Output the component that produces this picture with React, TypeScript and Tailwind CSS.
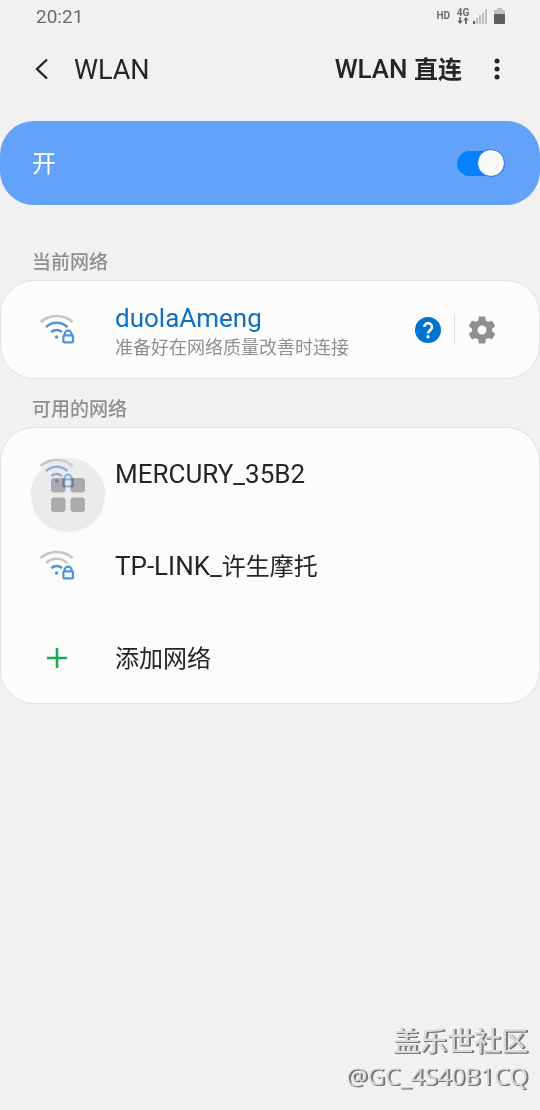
import { useState } from "react";

const OFF = "#c6c6c6";
const ON = "#4f95dc";

function WifiLock({ level }: { level: 1 | 2 }) {
  return (
    <svg viewBox="0 1 36 34" className="h-[34px] w-9" fill="none" strokeWidth="2.6" aria-hidden="true">
      <path d="M1.7 10A24 24 0 0 1 33.6 10" stroke={OFF} />
      <path d="M7 15.2A15 15 0 0 1 28.4 15.2" stroke={level > 1 ? ON : OFF} />
      <path d="M12.3 20A8.4 8.4 0 0 1 23 20" stroke={ON} />
      <circle cx="17.6" cy="25" r="1.8" fill={ON} />
      <path d="M25.6 23V22.2a3.5 3.5 0 0 1 7 0V23" stroke={ON} strokeWidth="2.3" />
      <rect x="24.4" y="23.4" width="9.6" height="7" rx="1" stroke={ON} strokeWidth="2.3" />
    </svg>
  );
}

function StatusBar() {
  return (
    <div className="flex h-8 items-center justify-between pr-[35px] pl-9 text-[#6b6b6b]">
      <time className="pt-px text-[19px] leading-8">20:21</time>
      <div className="flex h-4 items-center">
        <span className="text-[10px] leading-4 font-bold">HD</span>
        <div className="ml-[7px] flex h-4 w-3 flex-col items-center">
          <span className="text-[10px] leading-[9px] font-bold">4G</span>
          <svg viewBox="0 0 12 7" className="h-[7px] w-3" fill="#5e5e5e" aria-hidden="true">
            <path d="M2.3 0h1.6v3.8h1.9L3.1 7 .4 3.8h1.9zM8.1 7h1.6V3.2h1.9L8.9 0 6.2 3.2h1.9z" />
          </svg>
        </div>
        <svg viewBox="0 0 15 15" className="ml-1 h-[15px] w-[15px]" fill="#c0c0c0" aria-hidden="true">
          <rect x="0" y="12" width="2" height="3" fill="#5e5e5e" />
          <rect x="3" y="9" width="2" height="6" />
          <rect x="6" y="6" width="2" height="9" />
          <rect x="9" y="4" width="2" height="11" />
          <rect x="12" y="0" width="2" height="15" />
        </svg>
        <svg viewBox="0 0 11 16" className="ml-[6px] h-4 w-[11px]" aria-hidden="true">
          <path d="M3 0h5v2h2a1 1 0 0 1 1 1v4H0V3a1 1 0 0 1 1-1h2z" fill="#c0c0c0" />
          <path d="M0 6h11v9a1 1 0 0 1-1 1H1a1 1 0 0 1-1-1z" fill="#5e5e5e" />
        </svg>
      </div>
    </div>
  );
}

function Header() {
  return (
    <header className="flex h-[73px] items-center px-7 text-[#252525]">
      <button aria-label="返回" className="flex h-10 w-7 items-center justify-center">
        <svg viewBox="0 0 14 22" className="h-[22px] w-[14px]" fill="none" stroke="currentColor" strokeWidth="2.4" aria-hidden="true">
          <path d="M12 1.5L2 11l10 9.5" />
        </svg>
      </button>
      <h1 className="ml-[18px] flex-1 pt-0.5 text-[27px] leading-10">WLAN</h1>
      <button className="pt-0.5 text-[26px] leading-10 font-medium">
        WLAN <span className="text-2xl leading-10 font-bold">直连</span>
      </button>
      <button aria-label="更多选项" className="ml-6 flex h-10 w-[26px] items-center justify-start pl-2">
        <svg viewBox="0 0 6 22" className="h-[22px] w-[6px]" fill="currentColor" aria-hidden="true">
          <circle cx="3" cy="3" r="2.5" />
          <circle cx="3" cy="11" r="2.5" />
          <circle cx="3" cy="19" r="2.5" />
        </svg>
      </button>
    </header>
  );
}

function MasterSwitch() {
  const [on, setOn] = useState(true);
  return (
    <label className="mt-4 flex h-[84px] items-center justify-between rounded-[34px] bg-[#62a2fb] pr-[35px] pl-8 text-2xl text-white">
      <span className="pt-0.5">{on ? "开" : "关"}</span>
      <span className="flex h-7 w-12 items-center">
        <input
          type="checkbox"
          role="switch"
          checked={on}
          onChange={(e) => setOn(e.target.checked)}
          className="flex h-[25px] w-12 appearance-none items-center rounded-full bg-[#8a8a8a] before:size-7 before:shrink-0 before:rounded-full before:border before:border-[#1f7be0] before:bg-[#fafafa] checked:justify-end checked:bg-[#0381fe]"
        />
      </span>
    </label>
  );
}

function NetworkRow({ latin, local, icon }: { latin?: string; local?: string; icon: React.ReactNode }) {
  return (
    <li>
      <button className="flex h-[92px] w-full items-center pl-[38px] text-left">
        <span className="flex w-9 justify-center">{icon}</span>
        <span className="ml-10 text-[26px] leading-8 text-[#252525]">
          {latin}
          <span className="text-2xl leading-8">{local}</span>
        </span>
      </button>
    </li>
  );
}

function AssistButton() {
  return (
    <button
      aria-label="辅助菜单"
      className="absolute top-[30px] left-[30px] flex size-[74px] items-center justify-center rounded-full bg-[#d8d8d8]/45 shadow-[0_0_3px_rgba(0,0,0,0.06)]"
    >
      <svg viewBox="0 0 34 34" className="size-[34px] mix-blend-multiply" fill="#bababa" aria-hidden="true">
        <rect x="0" y="0" width="14.5" height="14.5" rx="3" />
        <rect x="19.5" y="0" width="14.5" height="14.5" rx="3" />
        <rect x="0" y="19.5" width="14.5" height="14.5" rx="3" />
        <rect x="19.5" y="19.5" width="14.5" height="14.5" rx="3" />
      </svg>
    </button>
  );
}

export default function App() {
  return (
    <div className="flex min-h-screen flex-col bg-[#f1f1f1] font-['Roboto','Noto_Sans_CJK_SC',sans-serif]">
      <StatusBar />
      <Header />
      <main className="flex-1">
        <MasterSwitch />

        <h2 className="mt-11 pl-8 text-[19px] leading-7 font-medium text-[#8f8f8f]">当前网络</h2>
        <section className="mt-[3px] flex h-[99px] items-center rounded-[34px] border border-[#e2e2e2] bg-[#fcfcfc] pr-[43px] pl-[38px]">
          <WifiLock level={2} />
          <button className="ml-10 flex flex-1 flex-col pt-1 text-left">
            <span className="text-[26px] leading-8 text-[#0f70bf]">duolaAmeng</span>
            <span className="text-lg leading-7 text-[#8f8f8f]">准备好在网络质量改善时连接</span>
          </button>
          <button aria-label="帮助">
            <svg viewBox="0 0 26 26" className="size-[26px]" fill="none" aria-hidden="true">
              <circle cx="13" cy="13" r="13" fill="#0072cf" />
              <path d="M9.3 10a3.8 3.8 0 1 1 6 3.1c-1.5 1.1-2.3 1.7-2.3 3.5" stroke="#fff" strokeWidth="2.6" />
              <circle cx="13" cy="19.8" r="1.7" fill="#fff" />
            </svg>
          </button>
          <span className="mx-[13px] h-[29px] w-px bg-[#dedede]" />
          <button aria-label="网络设置">
            <svg viewBox="2 2 20 20" className="size-7" fill="#8f8f8f" aria-hidden="true">
              <path d="M19.14 12.94c.04-.3.06-.61.06-.94 0-.32-.02-.64-.07-.94l2.03-1.58c.18-.14.23-.41.12-.61l-1.92-3.32c-.12-.22-.37-.29-.59-.22l-2.39.96c-.5-.38-1.03-.7-1.62-.94l-.36-2.54c-.04-.24-.24-.41-.48-.41h-3.84c-.24 0-.43.17-.47.41l-.36 2.54c-.59.24-1.13.57-1.62.94l-2.39-.96c-.22-.08-.47 0-.59.22L2.74 8.87c-.12.21-.08.47.12.61l2.03 1.58c-.05.3-.09.63-.09.94s.02.64.07.94l-2.03 1.58c-.18.14-.23.41-.12.61l1.92 3.32c.12.22.37.29.59.22l2.39-.96c.5.38 1.03.7 1.62.94l.36 2.54c.05.24.24.41.48.41h3.84c.24 0 .44-.17.47-.41l.36-2.54c.59-.24 1.13-.56 1.62-.94l2.39.96c.22.08.47 0 .59-.22l1.92-3.32c.12-.22.07-.47-.12-.61l-2.01-1.58zM12 15.2a3.2 3.2 0 1 1 0-6.4 3.2 3.2 0 0 1 0 6.4z" />
            </svg>
          </button>
        </section>

        <h2 className="mt-[17px] pl-8 text-[19px] leading-7 font-medium text-[#8f8f8f]">可用的网络</h2>
        <section className="relative mt-[3px] rounded-[34px] border border-[#e2e2e2] bg-[#fcfcfc]">
          <ul className="-mb-px">
            <NetworkRow latin="MERCURY_35B2" icon={<WifiLock level={2} />} />
            <NetworkRow latin="TP-LINK_" local="许生摩托" icon={<WifiLock level={1} />} />
            <NetworkRow
              local="添加网络"
              icon={
                <svg viewBox="0 0 22 22" className="size-[22px]" stroke="#16ab54" strokeWidth="2.6" aria-hidden="true">
                  <path d="M11 1v20M1 11h20" />
                </svg>
              }
            />
          </ul>
          <AssistButton />
        </section>
      </main>

      <footer className="flex flex-col items-end pr-3 pb-[18px] text-[#dcdcdc] [text-shadow:1px_1px_0_#777,2px_1px_0_#777,-1px_-1px_0_#f9f6f2]">
        <span className="text-[27px] leading-9 font-medium">盖乐世社区</span>
        <span className="font-['Open_Sans','Noto_Sans',sans-serif] text-2xl leading-8">@GC_4S40B1CQ</span>
      </footer>
    </div>
  );
}
